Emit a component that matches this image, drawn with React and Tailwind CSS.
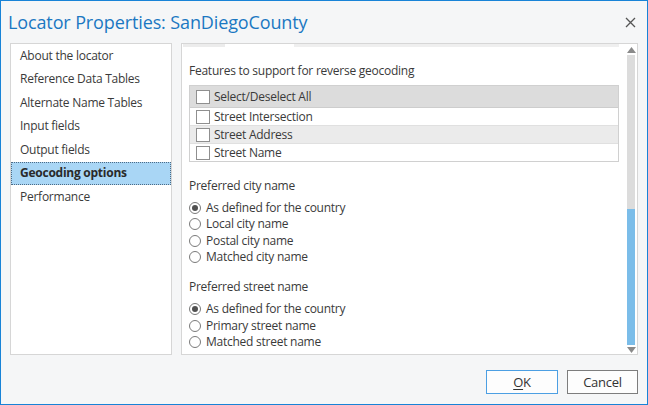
import React from "react";

const navItems = [
  "About the locator",
  "Reference Data Tables",
  "Alternate Name Tables",
  "Input fields",
  "Output fields",
  "Geocoding options",
  "Performance",
];

function Check() {
  return <div className="w-[14px] h-[14px] border border-[#8f8f8f] bg-white shrink-0" />;
}

function Radio({ checked, label }) {
  return (
    <div className="h-[16.3px] flex items-center gap-[5px]">
      <div className="w-[12px] h-[12px] rounded-full border border-[#7a7a7a] bg-white flex items-center justify-center shrink-0">
        {checked && <div className="w-[6px] h-[6px] rounded-full bg-[#505050]" />}
      </div>
      <span className="leading-[16px]">{label}</span>
    </div>
  );
}

export default function App() {
  return (
    <div className="w-[648px] h-[405px] bg-[#f5f6f7] border border-[#1883d7] flex flex-col text-[12px] tracking-[-0.25px] text-[#3a3a3a] font-['Open_Sans',sans-serif] overflow-hidden">
      {/* Title bar */}
      <div className="h-[42px] shrink-0 flex items-center justify-between pl-[7px] pr-[10px]">
        <span className="text-[18px] tracking-[-0.12px] font-normal text-[#1b78c2] leading-[24px]">Locator Properties: SanDiegoCounty</span>
        <svg width="11" height="11" viewBox="0 0 11 11" className="mr-[1px]">
          <path d="M1 1 L10 10 M10 1 L1 10" stroke="#555" strokeWidth="1.3" />
        </svg>
      </div>

      {/* Panels */}
      <div className="h-[312px] shrink-0 flex gap-[9px] px-[9px]">
        {/* Left nav */}
        <div className="w-[162px] bg-white border border-[#d6d6d6] flex flex-col">
          {navItems.map((item) =>
            item === "Geocoding options" ? (
              <div
                key={item}
                className="h-[23.5px] flex items-center pl-[8px] bg-[#a9d6f5] border border-dotted border-[#4d6b85] font-bold text-[#2a2a2a]"
              >
                {item}
              </div>
            ) : (
              <div key={item} className="h-[23.5px] flex items-center pl-[9px]">
                {item}
              </div>
            )
          )}
        </div>

        {/* Right content */}
        <div className="flex-1 bg-white border border-[#d6d6d6] flex">
          <div className="flex-1 flex flex-col pl-[7px] pr-[4px]">
            <div className="h-[3px] flex -ml-[6px]">
              <div className="w-[42px] bg-[#ececec]" />
              <div className="w-[69px] bg-white" />
              <div className="flex-1 bg-[#efefef]" />
            </div>
            <div className="mt-[16px] leading-[16px]">Features to support for reverse geocoding</div>

            <div className="mt-[6px] border border-[#d0d0d0] flex flex-col">
              <div className="h-[22px] bg-[#dcdcdc] border-b border-[#cdcdcd] flex items-center pl-[6px] gap-[4px]">
                <Check />
                <span>Select/Deselect All</span>
              </div>
              <div className="h-[18px] bg-white border-b border-[#e0e0e0] flex items-center pl-[6px] gap-[4px]">
                <Check />
                <span>Street Intersection</span>
              </div>
              <div className="h-[18px] bg-[#ebebeb] border-b border-[#e0e0e0] flex items-center pl-[6px] gap-[4px]">
                <Check />
                <span>Street Address</span>
              </div>
              <div className="h-[17px] bg-white flex items-center pl-[6px] gap-[4px]">
                <Check />
                <span>Street Name</span>
              </div>
            </div>

            <div className="mt-[16px] leading-[16px]">Preferred city name</div>
            <div className="mt-[6px] flex flex-col">
              <Radio checked label="As defined for the country" />
              <Radio label="Local city name" />
              <Radio label="Postal city name" />
              <Radio label="Matched city name" />
            </div>

            <div className="mt-[14px] leading-[16px]">Preferred street name</div>
            <div className="mt-[6px] flex flex-col">
              <Radio checked label="As defined for the country" />
              <Radio label="Primary street name" />
              <Radio label="Matched street name" />
            </div>
          </div>

          {/* Scrollbar */}
          <div className="w-[14px] flex flex-col items-center pt-[3px] pb-[1px] pl-[2px]">
            <svg width="9" height="6" viewBox="0 0 9 6">
              <path d="M4.5 0 L9 6 L0 6 Z" fill="#8a8a8a" />
            </svg>
            <div className="mt-[2px] w-[8px] flex-1 bg-[#dcdcdc] flex flex-col justify-end">
              <div className="h-[136px] bg-[#7bbde9]" />
            </div>
            <svg width="9" height="6" viewBox="0 0 9 6" className="mt-[2px]">
              <path d="M0 0 L9 0 L4.5 6 Z" fill="#8a8a8a" />
            </svg>
          </div>
        </div>
      </div>

      {/* Footer */}
      <div className="flex-1 flex justify-end items-start pt-[15px] pr-[9px] gap-[9px]">
        <button className="w-[72px] h-[24px] border border-[#4c9fe3] bg-[#fdfdfd] text-[13px] text-[#333] leading-none">
          <span className="underline underline-offset-2">O</span>K
        </button>
        <button className="w-[71px] h-[24px] border border-[#7d7d7d] bg-[#fdfdfd] text-[13px] text-[#333] leading-none">
          Cancel
        </button>
      </div>
    </div>
  );
}
